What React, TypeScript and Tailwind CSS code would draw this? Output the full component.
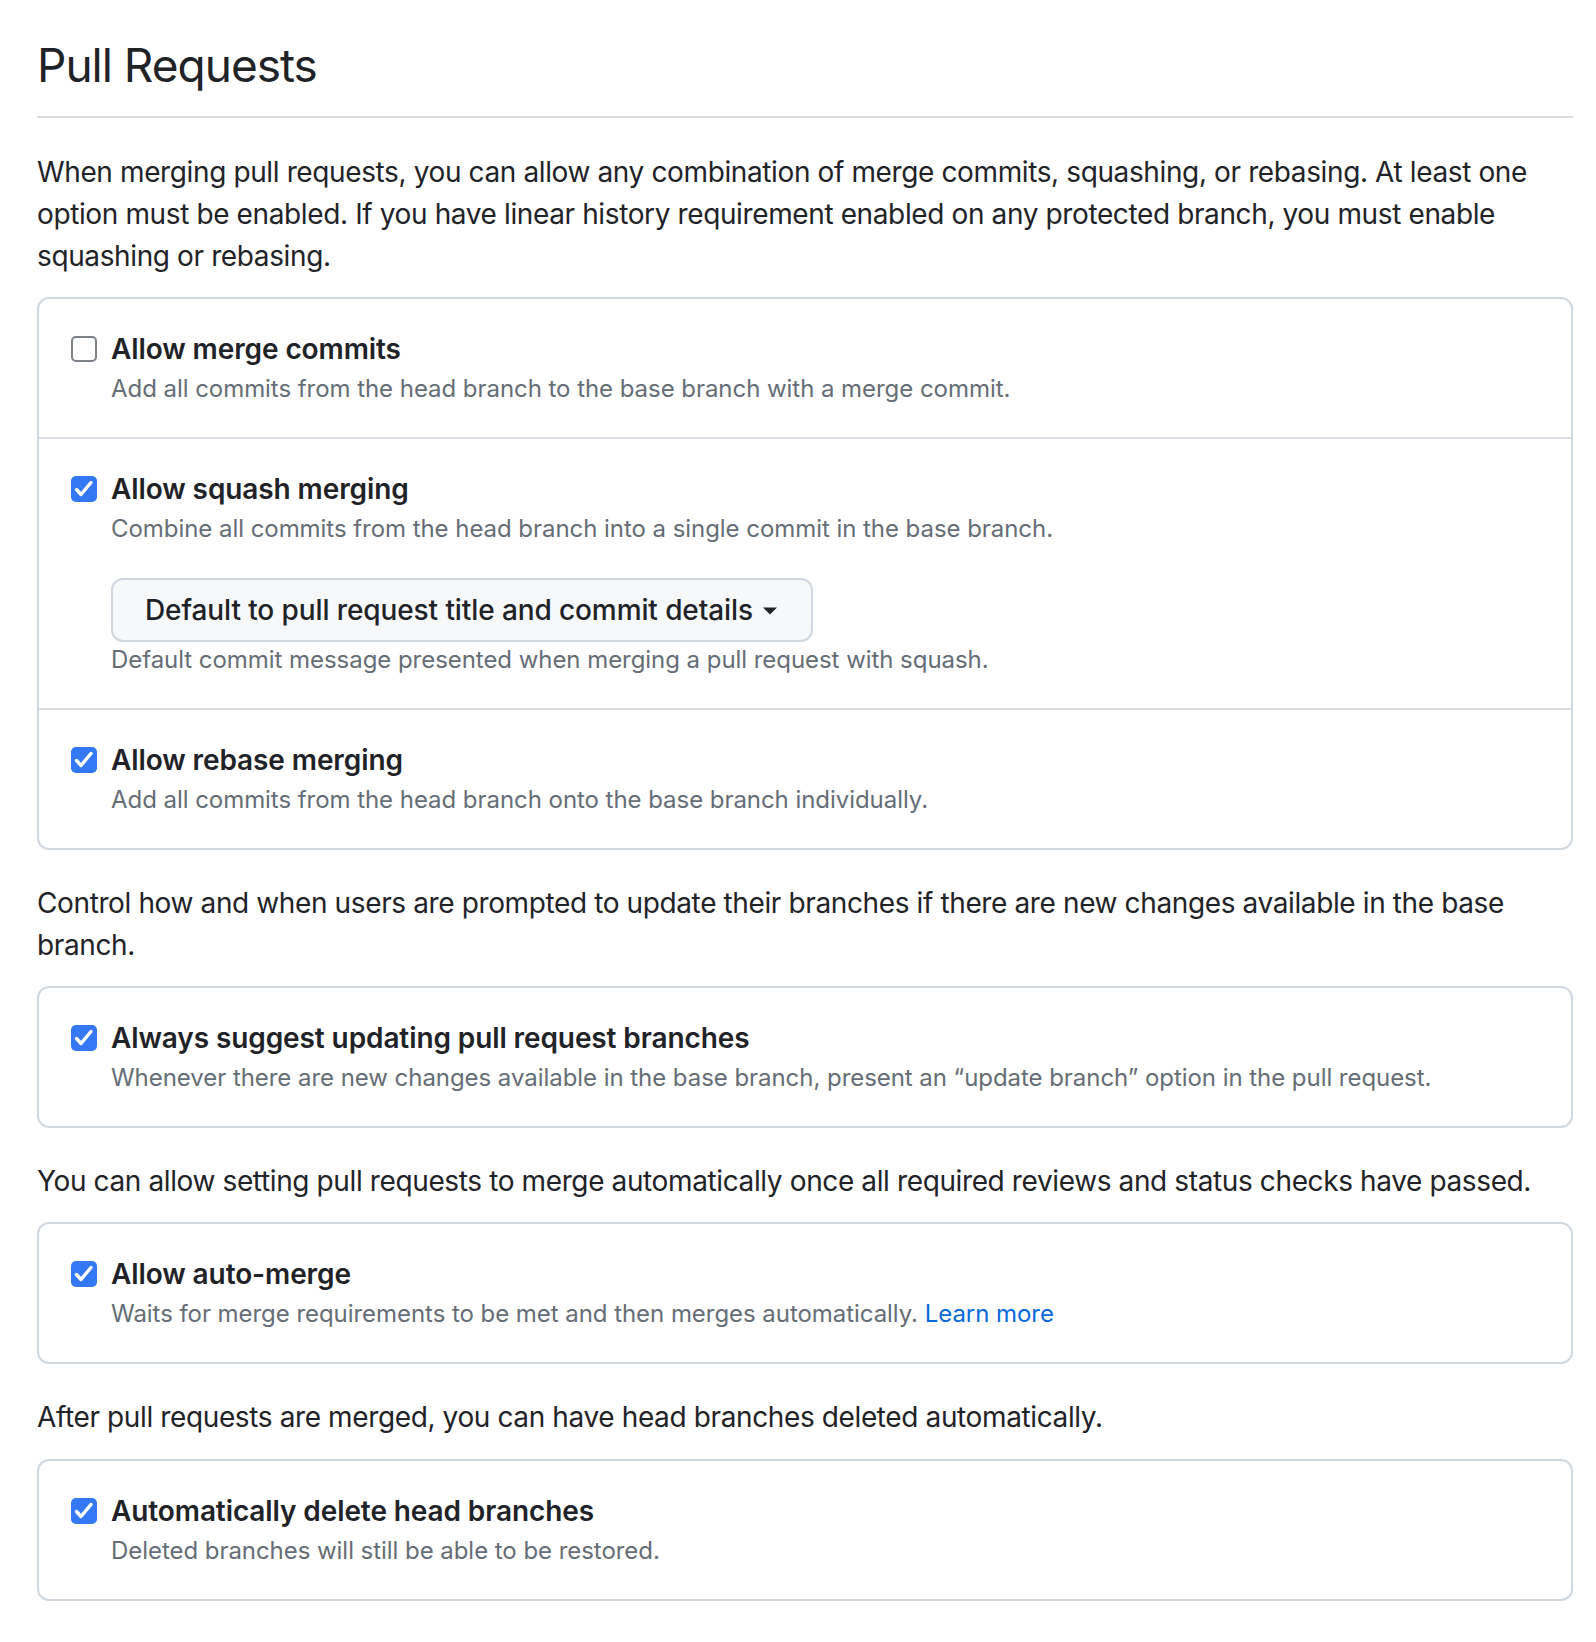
import type { ReactNode } from 'react';

function CheckMark({ checked }: { checked: boolean }) {
  if (!checked) {
    return (
      <span className="mt-[5px] block h-[26px] w-[26px] shrink-0 rounded-[5px] border-2 border-[#7d8188] bg-white" />
    );
  }
  return (
    <span className="mt-[5px] flex h-[26px] w-[26px] shrink-0 items-center justify-center rounded-[5px] bg-[#3478f6]">
      <svg width="26" height="26" viewBox="0 0 26 26" fill="none">
        <path
          d="M5.5 13.5 L10 18.5 L20 6.5"
          stroke="white"
          strokeWidth="3.4"
          strokeLinecap="round"
          strokeLinejoin="round"
        />
      </svg>
    </span>
  );
}

function OptionRow({
  label,
  note,
  checked,
  children,
  divider,
}: {
  label: string;
  note: ReactNode;
  checked: boolean;
  children?: ReactNode;
  divider?: boolean;
}) {
  return (
    <div className={`flex gap-[14px] pl-[32px] pr-[32px] pt-[32px] pb-[30px] ${divider ? 'border-t-2 border-[#d8dee4]' : ''}`}>
      <CheckMark checked={checked} />
      <div className="min-w-0 flex-1">
        <div className="text-[28px] font-semibold leading-[36px] tracking-[-0.1px] text-[#1f2328]">{label}</div>
        <div className="mt-[4px] text-[24px] leading-[36px] tracking-[-0.05px] text-[#656d76]">{note}</div>
        {children}
      </div>
    </div>
  );
}

function Box({ children }: { children: ReactNode }) {
  return <div className="rounded-[12px] border-2 border-[#d0d7de] bg-white">{children}</div>;
}

export default function App() {
  return (
    <div
      className="min-h-screen bg-white pb-[36px] pl-[37px] pr-[23px] pt-[35px] text-[#1f2328]"
      style={{ fontFamily: 'Inter, "Noto Sans", "Liberation Sans", sans-serif' }}
    >
      <h2 className="border-b-2 border-[#d8dee4] pb-[21px] text-[46px] font-normal leading-[60px] tracking-[-1px]">
        Pull Requests
      </h2>

      <p className="mb-[20px] mt-[33px] text-[28px] leading-[42px] tracking-[-0.38px]">
        When merging pull requests, you can allow any combination of merge commits, squashing, or rebasing. At least one
        option must be enabled. If you have linear history requirement enabled on any protected branch, you must enable
        squashing or rebasing.
      </p>

      <Box>
        <OptionRow
          checked={false}
          label="Allow merge commits"
          note="Add all commits from the head branch to the base branch with a merge commit."
        />
        <OptionRow
          divider
          checked
          label="Allow squash merging"
          note="Combine all commits from the head branch into a single commit in the base branch."
        >
          <button
            type="button"
            className="mt-[31px] flex h-[64px] items-center gap-[9px] rounded-[12px] border-2 border-[#d0d7de] bg-[#f6f8fa] pl-[32px] pr-[33px] text-[28px] font-medium tracking-[-0.1px] text-[#1f2328]"
          >
            Default to pull request title and commit details
            <svg width="16" height="10" viewBox="0 0 16 10" className="mt-[2px]">
              <path d="M1 1.5 H15 L8 8.5 Z" fill="#1f2328" />
            </svg>
          </button>
          <div className="text-[24px] leading-[36px] tracking-[-0.05px] text-[#656d76]">
            Default commit message presented when merging a pull request with squash.
          </div>
        </OptionRow>
        <OptionRow
          divider
          checked
          label="Allow rebase merging"
          note="Add all commits from the head branch onto the base branch individually."
        />
      </Box>

      <p className="mb-[20px] mt-[32px] text-[28px] leading-[42px] tracking-[-0.38px]">
        Control how and when users are prompted to update their branches if there are new changes available in the base
        branch.
      </p>

      <Box>
        <OptionRow
          checked
          label="Always suggest updating pull request branches"
          note="Whenever there are new changes available in the base branch, present an “update branch” option in the pull request."
        />
      </Box>

      <p className="mb-[20px] mt-[32px] text-[28px] leading-[42px] tracking-[-0.38px]">
        You can allow setting pull requests to merge automatically once all required reviews and status checks have passed.
      </p>

      <Box>
        <OptionRow
          checked
          label="Allow auto-merge"
          note={
            <>
              Waits for merge requirements to be met and then merges automatically.{' '}
              <a href="#" className="text-[#0969da]">
                Learn more
              </a>
            </>
          }
        />
      </Box>

      <p className="mb-[21px] mt-[32px] text-[28px] leading-[42px] tracking-[-0.38px]">
        After pull requests are merged, you can have head branches deleted automatically.
      </p>

      <Box>
        <OptionRow
          checked
          label="Automatically delete head branches"
          note="Deleted branches will still be able to be restored."
        />
      </Box>
    </div>
  );
}
